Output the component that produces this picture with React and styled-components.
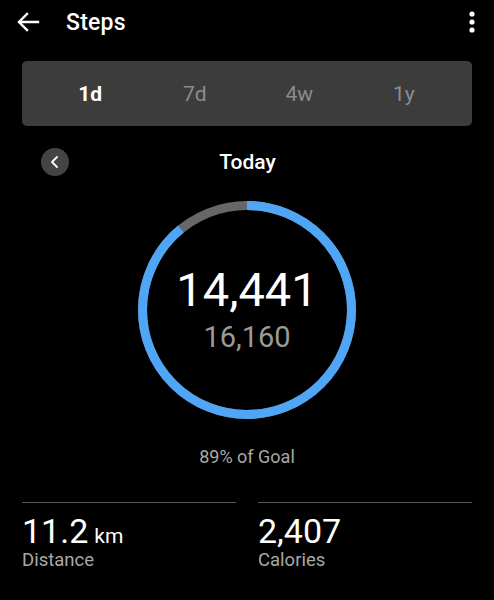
import styled, { createGlobalStyle } from "styled-components"

const Global = createGlobalStyle`
  html, body {
    margin: 0;
    padding: 0;
    background: #000;
  }
  body {
    font-family: Roboto, "Noto Sans", sans-serif;
    color: #fff;
  }
`

const Screen = styled.div`
  width: 494px;
  height: 600px;
  background: #000;
  overflow: hidden;
  display: flex;
  flex-direction: column;
`

const TopBar = styled.div`
  height: 44px;
  display: flex;
  align-items: center;
  padding: 0 16px;
`

const IconBtn = styled.div`
  display: flex;
  align-items: center;
  justify-content: center;
  width: ${p => p.$w || 24}px;
  height: 24px;
`

const Title = styled.div`
  flex: 1;
  margin-left: 26px;
  font-size: 23px;
  font-weight: 500;
  letter-spacing: 0.2px;
`

const Segments = styled.div`
  margin: 17px 22px 0;
  height: 65px;
  background: #3c3c3c;
  border-radius: 5px;
  padding: 0 16px;
  display: grid;
  grid-template-columns: repeat(4, 1fr);
  align-items: center;
`

const Segment = styled.div`
  text-align: center;
  font-size: 21px;
  font-weight: ${p => (p.$active ? 700 : 400)};
  color: ${p => (p.$active ? "#fff" : "#8c8c8c")};
`

const DayRow = styled.div`
  position: relative;
  height: 28px;
  margin-top: 22px;
  display: flex;
  align-items: center;
  justify-content: center;
`

const RoundBtn = styled.div`
  position: absolute;
  left: 41px;
  top: 0;
  width: 28px;
  height: 28px;
  border-radius: 50%;
  background: #444;
  display: flex;
  align-items: center;
  justify-content: center;
`

const DayLabel = styled.div`
  font-size: 21px;
  font-weight: 500;
  margin-left: 1px;
`

const RingWrap = styled.div`
  position: relative;
  width: 220px;
  height: 220px;
  margin: 24px auto 0;
  display: flex;
  flex-direction: column;
  align-items: center;
  justify-content: center;
`

const RingSvg = styled.svg`
  position: absolute;
  inset: 0;
`

const BigNum = styled.div`
  font-size: 47px;
  line-height: 1;
  margin-top: -2px;
`

const SubNum = styled.div`
  font-size: 29px;
  line-height: 1;
  color: #9a9a9a;
  margin-top: 10px;
`

const Goal = styled.div`
  text-align: center;
  font-size: 18px;
  color: #a8a8a8;
  margin-top: 26px;
`

const Stats = styled.div`
  margin: 35px 22px 0;
  display: grid;
  grid-template-columns: 1fr 1fr;
  column-gap: 22px;
`

const Stat = styled.div`
  border-top: 1px solid #555;
  padding-top: 10px;
`

const StatValue = styled.div`
  font-size: 34px;
  line-height: 36px;
  height: 36px;
  color: #fff;
`

const Unit = styled.span`
  font-size: 21px;
  line-height: 0;
  margin-left: 6px;
`

const StatLabel = styled.div`
  font-size: 18.5px;
  line-height: 22px;
  color: #a8a8a8;
`

const Ring = ({ pct }) => {
  const r = 104.5
  const c = 2 * Math.PI * r
  const done = c * pct
  return (
    <RingSvg width="220" height="220" viewBox="0 0 220 220">
      <circle cx="110" cy="110" r={r} fill="none" stroke="#676767" strokeWidth="9" />
      <circle
        cx="110"
        cy="110"
        r={r}
        fill="none"
        stroke="#4fa6f7"
        strokeWidth="9"
        strokeDasharray={`${done} ${c}`}
        transform="rotate(-90 110 110)"
      />
    </RingSvg>
  )
}

export default function App() {
  return (
    <Screen>
      <Global />
      <TopBar>
        <IconBtn>
          <svg width="24" height="24" viewBox="0 0 24 24" fill="none" stroke="#fff" strokeWidth="2.4" strokeLinecap="square">
            <path d="M22 12H3.5M11 4l-8 8 8 8" />
          </svg>
        </IconBtn>
        <Title>Steps</Title>
        <IconBtn $w={12}>
          <svg width="6" height="24" viewBox="0 0 6 24" fill="#fff">
            <circle cx="3" cy="4" r="2.6" />
            <circle cx="3" cy="12" r="2.6" />
            <circle cx="3" cy="20" r="2.6" />
          </svg>
        </IconBtn>
      </TopBar>

      <Segments>
        <Segment $active>1d</Segment>
        <Segment>7d</Segment>
        <Segment>4w</Segment>
        <Segment>1y</Segment>
      </Segments>

      <DayRow>
        <RoundBtn>
          <svg width="14" height="14" viewBox="0 0 14 14" fill="none" stroke="#fff" strokeWidth="1.8" strokeLinecap="round" strokeLinejoin="round">
            <path d="M9 2L4 7l5 5" />
          </svg>
        </RoundBtn>
        <DayLabel>Today</DayLabel>
      </DayRow>

      <RingWrap>
        <Ring pct={0.89} />
        <BigNum>14,441</BigNum>
        <SubNum>16,160</SubNum>
      </RingWrap>

      <Goal>89% of Goal</Goal>

      <Stats>
        <Stat>
          <StatValue>11.2<Unit>km</Unit></StatValue>
          <StatLabel>Distance</StatLabel>
        </Stat>
        <Stat>
          <StatValue>2,407</StatValue>
          <StatLabel>Calories</StatLabel>
        </Stat>
      </Stats>
    </Screen>
  )
}
